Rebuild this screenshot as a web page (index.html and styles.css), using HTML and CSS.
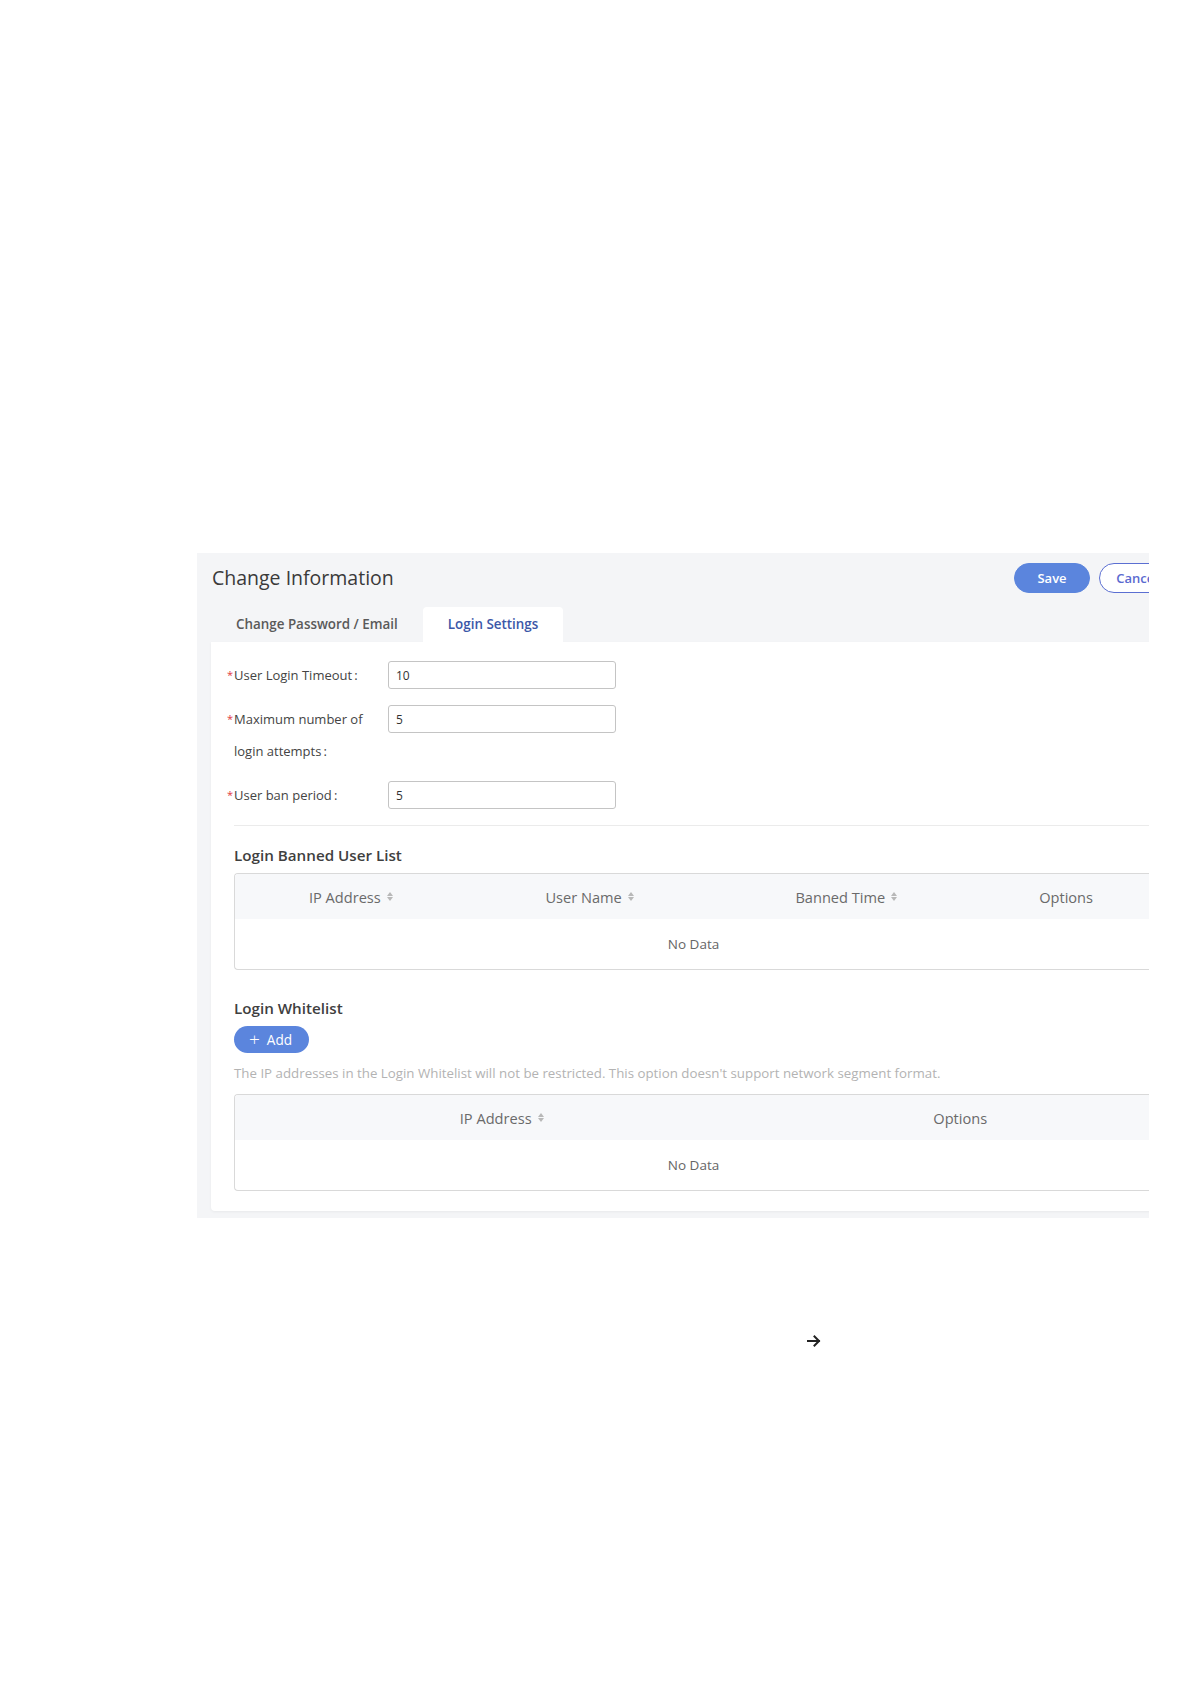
FILE: index.html
```html
<!DOCTYPE html>
<html lang="en">
<head>
<meta charset="utf-8">
<title>Change Information</title>
<link rel="stylesheet" href="styles.css">
</head>
<body>
<div class="page">
  <div class="viewport">
    <div class="panel">
      <div class="header">
        <h1 class="title">Change Information</h1>
        <div class="actions">
          <button class="btn btn-primary">Save</button>
          <button class="btn btn-ghost">Cancel</button>
        </div>
      </div>
      <div class="tabs">
        <div class="tab">Change Password / Email</div>
        <div class="tab tab-active">Login Settings</div>
      </div>
      <div class="card">
        <div class="form">
          <div class="row">
            <div class="label"><span class="req">*</span><span class="ltext">User Login Timeout&#8201;:</span></div>
            <div class="field"><input class="input" type="text" value="10"></div>
          </div>
          <div class="row">
            <div class="label"><span class="req">*</span><span class="ltext">Maximum number of login attempts&#8201;:</span></div>
            <div class="field"><input class="input" type="text" value="5"></div>
          </div>
          <div class="row">
            <div class="label"><span class="req">*</span><span class="ltext">User ban period&#8201;:</span></div>
            <div class="field"><input class="input" type="text" value="5"></div>
          </div>
        </div>
        <div class="section">
          <div class="divider"></div>
          <h2 class="stitle first">Login Banned User List</h2>
          <div class="table">
            <div class="thead">
              <div class="th c1">IP Address<span class="sort"><i class="up"></i><i class="dn"></i></span></div>
              <div class="th c2">User Name<span class="sort"><i class="up"></i><i class="dn"></i></span></div>
              <div class="th c3">Banned Time<span class="sort"><i class="up"></i><i class="dn"></i></span></div>
              <div class="th c4">Options</div>
            </div>
            <div class="tbody">No Data</div>
          </div>
          <h2 class="stitle second">Login Whitelist</h2>
          <button class="btn btn-add"><span class="plus">+</span>Add</button>
          <p class="hint">The IP addresses in the Login Whitelist will not be restricted. This option doesn't support network segment format.</p>
          <div class="table">
            <div class="thead">
              <div class="th w1">IP Address<span class="sort"><i class="up"></i><i class="dn"></i></span></div>
              <div class="th w2">Options</div>
            </div>
            <div class="tbody">No Data</div>
          </div>
        </div>
      </div>
    </div>
  </div>
  <div class="arrow-row">
    <svg class="arrow" width="14" height="12" viewBox="0 0 14 12" aria-hidden="true">
      <path d="M1 6 H12 M7.5 1.5 L12 6 L7.5 10.5" fill="none" stroke="#222" stroke-width="2" stroke-linecap="square" stroke-linejoin="miter"/>
    </svg>
  </div>
</div>
</body>
</html>
```

FILE: styles.css
```css
* { box-sizing: border-box; }
html, body { margin: 0; padding: 0; background: #ffffff; }
body { font-family: "Open Sans", "Noto Sans", "Liberation Sans", sans-serif; color: #333; }

.page { padding: 553px 0 0 197px; }

.viewport {
  width: 952px;
  height: 665px;
  overflow: hidden;
  background: #f4f5f7;
}

.panel { width: 1000px; }

.header {
  display: flex;
  align-items: center;
  justify-content: space-between;
  height: 40px;
  padding: 10px 22px 0 15px;
}

.title {
  margin: 0;
  font-size: 19.5px;
  font-weight: 400;
  line-height: 30px;
  color: #3a3a3a;
}

.actions { display: flex; gap: 9px; }

.btn {
  font-family: inherit;
  border-radius: 16px;
  cursor: pointer;
}

.btn-primary, .btn-ghost {
  width: 76px;
  height: 30px;
  font-size: 13px;
  font-weight: 600;
}

.btn-primary {
  background: #5b85dd;
  border: 1px solid #5b85dd;
  color: #ffffff;
}

.btn-ghost {
  background: #ffffff;
  border: 1px solid #5b6fd2;
  color: #5b6ad0;
}

.tabs {
  display: flex;
  margin: 14px 0 0 14px;
  height: 35px;
}

.tab {
  padding: 0 25px;
  height: 35px;
  line-height: 35px;
  font-size: 13.4px;
  font-weight: 600;
  color: #5a5a5a;
  border-radius: 4px 4px 0 0;
}

.tab-active {
  background: #ffffff;
  color: #3c57a8;
}

.card {
  margin-left: 14px;
  width: 986px;
  background: #ffffff;
  border-radius: 0 0 0 4px;
  box-shadow: 0 1px 3px rgba(0, 0, 0, 0.05);
  padding: 17px 0 20px 16px;
}

.form { display: flex; flex-direction: column; gap: 12px; }

.row { display: flex; align-items: flex-start; }

.label {
  display: flex;
  width: 161px;
  font-size: 13px;
  line-height: 32px;
  color: #444;
}

.req {
  width: 7px;
  color: #e0393e;
  font-size: 11px;
}

.ltext { width: 140px; }

.field { padding-top: 2px; }

.input {
  display: block;
  width: 228px;
  height: 28px;
  border: 1px solid #c4c4c4;
  border-radius: 3px;
  padding: 0 7px;
  font-family: inherit;
  font-size: 12px;
  color: #333;
  background: #ffffff;
}

.section { padding-left: 7px; }

.divider {
  margin-top: 14px;
  height: 1px;
  background: #ebebeb;
}

.stitle {
  margin: 0;
  font-size: 15.2px;
  font-weight: 600;
  line-height: 20px;
  color: #3f3f3f;
}

.stitle.first { margin-top: 19px; }
.stitle.second { margin-top: 28px; }

.table {
  width: 918px;
  margin-top: 8px;
  border: 1px solid #d9d9d9;
  border-right: 0;
  border-radius: 4px 0 0 4px;
  overflow: hidden;
}

.thead {
  display: flex;
  height: 45px;
  background: #f7f8fa;
}

.th {
  display: flex;
  align-items: center;
  justify-content: center;
  font-size: 14.6px;
  color: #6a6a6a;
}

.c1 { width: 232px; }
.c2 { width: 246px; }
.c3 { width: 268px; }
.c4 { width: 172px; }
.w1 { width: 534px; }
.w2 { width: 384px; }

.sort {
  display: inline-flex;
  flex-direction: column;
  gap: 1px;
  margin-left: 6px;
}

.sort i {
  display: block;
  width: 0;
  height: 0;
  border-left: 3.5px solid transparent;
  border-right: 3.5px solid transparent;
}

.sort .up { border-bottom: 4px solid #b8b8b8; }
.sort .dn { border-top: 4px solid #b8b8b8; }

.tbody {
  height: 50px;
  display: flex;
  align-items: center;
  justify-content: center;
  font-size: 13.5px;
  color: #666;
}

.btn-add {
  display: flex;
  align-items: center;
  margin-top: 8px;
  width: 75px;
  height: 27px;
  padding: 0 0 0 15px;
  background: #5b85dd;
  border: 0;
  color: #ffffff;
  font-size: 13.6px;
  font-weight: 400;
}

.plus {
  font-size: 19px;
  font-weight: 300;
  margin-right: 7px;
  line-height: 1;
}

.hint {
  margin: 11px 0 0 0;
  font-size: 13.3px;
  line-height: 18px;
  color: #b3b3b3;
}

.hint + .table { margin-top: 12px; }

.arrow-row {
  padding: 117px 0 0 610px;
}

.arrow { display: block; }
```
